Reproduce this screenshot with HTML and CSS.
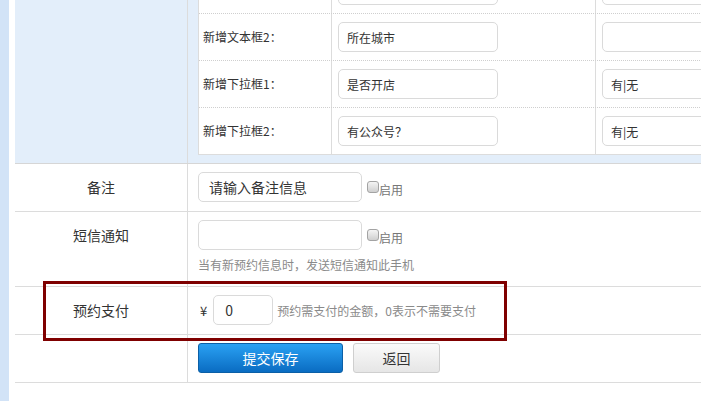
FILE: index.html
```html
<!DOCTYPE html>
<html lang="zh-CN">

<head>
    <meta charset="UTF-8" />
    <title>预约设置</title>
    <link rel="stylesheet" href="styles.css">
</head>

<body>
    <div class="page">
        <!-- 左侧边栏 -->
        <div class="side"></div>

        <div class="main">
            <div class="form">
                <!-- 自定义字段 -->
                <div class="row row-extra">
                    <div class="label"></div>
                    <div class="value">
                        <div class="fields">
                            <div class="field">
                                <div class="cell name"></div>
                                <div class="cell"><input class="box" type="text"></div>
                                <div class="cell"><input class="box" type="text"></div>
                            </div>
                            <div class="field">
                                <div class="cell name">新增文本框2：</div>
                                <div class="cell"><input class="box" type="text" value="所在城市"></div>
                                <div class="cell"><input class="box" type="text"></div>
                            </div>
                            <div class="field">
                                <div class="cell name">新增下拉框1：</div>
                                <div class="cell"><input class="box" type="text" value="是否开店"></div>
                                <div class="cell"><input class="box" type="text" value="有|无"></div>
                            </div>
                            <div class="field">
                                <div class="cell name">新增下拉框2：</div>
                                <div class="cell"><input class="box" type="text" value="有公众号？"></div>
                                <div class="cell"><input class="box" type="text" value="有|无"></div>
                            </div>
                        </div>
                    </div>
                </div>

                <div class="row">
                    <div class="label">备注</div>
                    <div class="value">
                        <div class="line">
                            <input class="box box-lg" type="text" value="请输入备注信息">
                            <span class="check"></span><span class="check-text">启用</span>
                        </div>
                    </div>
                </div>

                <div class="row">
                    <div class="label">短信通知</div>
                    <div class="value">
                        <div class="line">
                            <input class="box box-lg" type="text">
                            <span class="check"></span><span class="check-text">启用</span>
                        </div>
                        <div class="hint">当有新预约信息时，发送短信通知此手机</div>
                    </div>
                </div>

                <div class="row">
                    <div class="label">预约支付</div>
                    <div class="value">
                        <div class="line">
                            <span class="yen">¥</span>
                            <input class="box box-sm" type="text" value="0">
                            <span class="tip">预约需支付的金额，0表示不需要支付</span>
                        </div>
                    </div>
                </div>

                <div class="row">
                    <div class="label"></div>
                    <div class="value">
                        <div class="line buttons">
                            <button class="btn btn-blue">提交保存</button>
                            <button class="btn btn-gray">返回</button>
                        </div>
                    </div>
                </div>
            </div>
        </div>

        <!-- 标注框 -->
        <div class="mark"></div>
    </div>
</body>

</html>
```

FILE: styles.css
```css
body {
    margin: 0;
    padding: 0;
    background: #fff;
    font-family: "Noto Sans CJK SC", "Liberation Sans", sans-serif;
    color: #333;
    overflow: hidden;
}

.page {
    position: relative;
    display: flex;
    height: 401px;
    overflow: hidden;
}

.side {
    width: 9px;
    flex: none;
    background-color: #d2e3f7;
}

.main {
    flex: 1;
    margin-left: 6px;
    overflow: hidden;
}

.form {
    margin-top: -34px;
    width: 720px;
}

.row {
    display: grid;
    grid-template-columns: 173px 1fr;
    border-bottom: 1px solid #dcdcdc;
}

.label {
    border-right: 1px solid #dcdcdc;
    padding-top: 8px;
    line-height: 30px;
    font-size: 14px;
    text-align: center;
}

.value {
    padding: 8px 0 9px 10px;
}

/* 自定义字段 */
.row-extra {
    background-color: #e3eefa;
    border-bottom-color: #d6d6d6;
}

.row-extra .label {
    padding: 0;
}

.row-extra .value {
    padding: 0 0 8px 10px;
}

.fields {
    background: #fff;
    border-left: 1px solid #dcdcdc;
    border-bottom: 1px solid #dcdcdc;
}

.field {
    display: grid;
    grid-template-columns: 132px 264px 1fr;
    border-top: 1px dotted #cfcfcf;
}

.cell {
    padding: 8px 6px 8px 6px;
    border-left: 1px solid #dcdcdc;
}

.cell.name {
    border-left: none;
    padding-left: 4px;
    font-size: 12px;
    line-height: 30px;
}

.box {
    display: block;
    box-sizing: border-box;
    width: 160px;
    height: 30px;
    border: 1px solid #dadada;
    border-radius: 5px;
    padding: 0 8px;
    font-family: inherit;
    font-size: 12px;
    color: #333;
    background: #fff;
    outline: none;
}

.cell:last-child .box {
    width: 140px;
}

.line {
    display: flex;
    align-items: center;
}

.box-lg {
    width: 164px;
    padding: 0 10px;
    font-size: 14px;
}

.box-sm {
    width: 60px;
    padding: 0 11px;
    font-size: 14px;
}

.check {
    display: inline-block;
    box-sizing: border-box;
    width: 12px;
    height: 12px;
    margin-left: 5px;
    border: 1px solid #a3a3a3;
    border-radius: 3px;
    background: linear-gradient(#f4f4f4, #cfcfcf);
}

.check-text {
    font-size: 12px;
    color: #777;
    padding-top: 4px;
}

.hint {
    margin-top: 3px;
    line-height: 24px;
    font-size: 12px;
    color: #8a8a8a;
}

.yen {
    font-size: 13px;
    margin: 0 6px 0 2px;
}

.tip {
    margin-left: 4px;
    font-size: 12px;
    color: #8a8a8a;
}

.buttons {
    gap: 10px;
}

.btn {
    height: 30px;
    border-radius: 3px;
    font-family: inherit;
    font-size: 14px;
    padding: 0;
    cursor: pointer;
}

.btn-blue {
    width: 145px;
    color: #fff;
    border: 1px solid #0b5fa6;
    background: linear-gradient(#2aa1f3, #0a6cc2);
}

.btn-gray {
    width: 87px;
    color: #333;
    border: 1px solid #cfcfcf;
    background: linear-gradient(#fafafa, #e6e6e6);
}

/* 红色标注 */
.mark {
    position: absolute;
    left: 43px;
    top: 281px;
    width: 464px;
    height: 60px;
    box-sizing: border-box;
    border: 3px solid #7f0000;
}
```
